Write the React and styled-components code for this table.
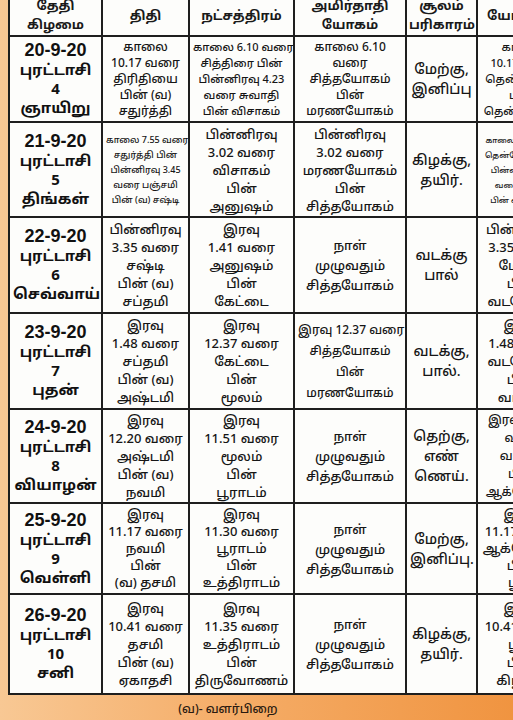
import React from "react";
import styled, { createGlobalStyle } from "styled-components";

const GlobalStyle = createGlobalStyle`
  html, body {
    margin: 0;
    padding: 0;
    overflow: hidden;
    width: 513px;
    height: 720px;
  }
  body {
    background: linear-gradient(90deg, #f8c894 0%, #f5ad68 45%, #f09440 100%);
    font-family: "Noto Sans", "Noto Sans Tamil", "Lohit Tamil", sans-serif;
    color: #1c1c1c;
  }
`;

const heads = [
  { w: 93, lines: ["தேதி", "கிழமை"] },
  { w: 87, lines: ["திதி"] },
  { w: 105, lines: ["நட்சத்திரம்"] },
  { w: 112, lines: ["அமிர்தாதி", "யோகம்"] },
  { w: 71, lines: ["சூலம்", "பரிகாரம்"] },
  { w: 90, lines: ["யோகினி"] }
];

const rows = [
  {
    h: 86,
    date: ["20-9-20", "புரட்டாசி", "4", "ஞாயிறு"],
    thithi: { size: 12, lh: 16, lines: ["காலை", "10.17 வரை", "திரிதியை", "பின் (வ)", "சதுர்த்தி"] },
    star: { size: 11, lh: 16, lines: ["காலை 6.10 வரை", "சித்திரை பின்", "பின்னிரவு 4.23", "வரை சுவாதி", "பின் விசாகம்"] },
    amirtha: { size: 12, lh: 16, lines: ["காலை 6.10", "வரை", "சித்தயோகம்", "பின்", "மரணயோகம்"] },
    soolam: ["மேற்கு,", "இனிப்பு"],
    yogini: { size: 11, lh: 16, lines: ["காலை", "10.17 வரை", "தென்மேற்கு", "பின்", "தென்கிழக்கு"] }
  },
  {
    h: 95,
    date: ["21-9-20", "புரட்டாசி", "5", "திங்கள்"],
    thithi: { size: 9, lh: 15, lines: ["காலை 7.55 வரை", "சதுர்த்தி பின்", "பின்னிரவு 3.45", "வரை பஞ்சமி", "பின் (வ) சஷ்டி"] },
    star: { size: 13, lh: 18, lines: ["பின்னிரவு", "3.02 வரை", "விசாகம்", "பின்", "அனுஷம்"] },
    amirtha: { size: 13, lh: 18, lines: ["பின்னிரவு", "3.02 வரை", "மரணயோகம்", "பின்", "சித்தயோகம்"] },
    soolam: ["கிழக்கு,", "தயிர்."],
    yogini: { size: 8, lh: 15, lines: ["காலை 7.55 வரை", "தென்மேற்கு பின்", "பின்னிரவு 3.45", "வரை மேற்கு", "பின் வடமேற்கு"] }
  },
  {
    h: 96,
    date: ["22-9-20", "புரட்டாசி", "6", "செவ்வாய்"],
    thithi: { size: 13, lh: 18, lines: ["பின்னிரவு", "3.35 வரை", "சஷ்டி", "பின் (வ)", "சப்தமி"] },
    star: { size: 13, lh: 18, lines: ["இரவு", "1.41 வரை", "அனுஷம்", "பின்", "கேட்டை"] },
    amirtha: { size: 13, lh: 20, lines: ["நாள்", "முழுவதும்", "சித்தயோகம்"] },
    soolam: ["வடக்கு", "பால்"],
    yogini: { size: 13, lh: 18, lines: ["பின்னிரவு", "3.35 வரை", "மேற்கு", "பின்", "வடமேற்கு"] }
  },
  {
    h: 96,
    date: ["23-9-20", "புரட்டாசி", "7", "புதன்"],
    thithi: { size: 13, lh: 18, lines: ["இரவு", "1.48 வரை", "சப்தமி", "பின் (வ)", "அஷ்டமி"] },
    star: { size: 13, lh: 18, lines: ["இரவு", "12.37 வரை", "கேட்டை", "பின்", "மூலம்"] },
    amirtha: { size: 12, lh: 21, lines: ["இரவு 12.37 வரை", "சித்தயோகம்", "பின்", "மரணயோகம்"] },
    soolam: ["வடக்கு,", "பால்."],
    yogini: { size: 13, lh: 18, lines: ["இரவு", "1.48 வரை", "வடமேற்கு", "பின்", "வடக்கு"] }
  },
  {
    h: 94,
    date: ["24-9-20", "புரட்டாசி", "8", "வியாழன்"],
    thithi: { size: 13, lh: 18, lines: ["இரவு", "12.20 வரை", "அஷ்டமி", "பின் (வ)", "நவமி"] },
    star: { size: 13, lh: 18, lines: ["இரவு", "11.51 வரை", "மூலம்", "பின்", "பூராடம்"] },
    amirtha: { size: 13, lh: 20, lines: ["நாள்", "முழுவதும்", "சித்தயோகம்"] },
    soolam: ["தெற்கு,", "எண்", "ணெய்."],
    yogini: { size: 12, lh: 18, lines: ["இரவு 12.20", "வரை", "வடக்கு", "பின்", "ஆக்னேயம்"] }
  },
  {
    h: 91,
    date: ["25-9-20", "புரட்டாசி", "9", "வெள்ளி"],
    thithi: { size: 13, lh: 17, lines: ["இரவு", "11.17 வரை", "நவமி", "பின்", "(வ) தசமி"] },
    star: { size: 13, lh: 17, lines: ["இரவு", "11.30 வரை", "பூராடம்", "பின்", "உத்திராடம்"] },
    amirtha: { size: 13, lh: 20, lines: ["நாள்", "முழுவதும்", "சித்தயோகம்"] },
    soolam: ["மேற்கு,", "இனிப்பு."],
    yogini: { size: 13, lh: 17, lines: ["இரவு", "11.17 வரை", "ஆக்னேயம்", "பின்", "பூமி"] }
  },
  {
    h: 100,
    date: ["26-9-20", "புரட்டாசி", "10", "சனி"],
    thithi: { size: 13, lh: 18, lines: ["இரவு", "10.41 வரை", "தசமி", "பின் (வ)", "ஏகாதசி"] },
    star: { size: 13, lh: 18, lines: ["இரவு", "11.35 வரை", "உத்திராடம்", "பின்", "திருவோணம்"] },
    amirtha: { size: 13, lh: 20, lines: ["நாள்", "முழுவதும்", "சித்தயோகம்"] },
    soolam: ["கிழக்கு,", "தயிர்."],
    yogini: { size: 13, lh: 18, lines: ["இரவு", "10.41 வரை", "பூமி", "பின்", "கிழக்கு"] }
  }
];

const App = () => {
  return (
    <Page>
      <GlobalStyle />
      <Sheet>
        <Table>
          <colgroup>
            {heads.map((c, i) => (
              <col key={i} style={{ width: c.w }} />
            ))}
          </colgroup>
          <thead>
            <tr>
              {heads.map((c, i) => (
                <HeadCell key={i}>
                  {c.lines.map((l, j) => (
                    <div key={j}>{l}</div>
                  ))}
                </HeadCell>
              ))}
            </tr>
          </thead>
          <tbody>
            {rows.map((r, i) => (
              <Row key={i} $h={r.h}>
                <DateCell>
                  {r.date.map((l, j) => (
                    <div key={j}>{l}</div>
                  ))}
                </DateCell>
                <Lines cell={r.thithi} />
                <Lines cell={r.star} />
                <Lines cell={r.amirtha} />
                <SoolamCell>
                  {r.soolam.map((l, j) => (
                    <div key={j}>{l}</div>
                  ))}
                </SoolamCell>
                <Lines cell={r.yogini} />
              </Row>
            ))}
          </tbody>
        </Table>
        <Note>(வ)- வளர்பிறை</Note>
      </Sheet>
    </Page>
  );
};

const Lines = ({ cell }) => (
  <Cell $size={cell.size} $lh={cell.lh}>
    {cell.lines.map((l, j) => (
      <div key={j}>{l}</div>
    ))}
  </Cell>
);

export default App;

const Page = styled.div`
  width: 513px;
  height: 720px;
  overflow: hidden;
`;

const Sheet = styled.div`
  padding-left: 8px;
  margin-top: -7px;
`;

const Table = styled.table`
  border-collapse: collapse;
  table-layout: fixed;
  width: 558px;
  background: #fdfdfb;
`;

const HeadCell = styled.th`
  height: 40px;
  border: 2px solid #1e1e1e;
  padding: 0 2px;
  font-size: 13px;
  line-height: 19px;
  font-weight: 700;
  color: #1a1a1a;
  text-align: center;
  vertical-align: middle;
  white-space: nowrap;
`;

const Row = styled.tr`
  height: ${(p) => p.$h}px;
`;

const Cell = styled.td`
  border: 2px solid #1e1e1e;
  padding: 0 3px;
  font-size: ${(p) => p.$size}px;
  line-height: ${(p) => p.$lh}px;
  font-weight: 500;
  color: #161616;
  text-align: center;
  vertical-align: middle;
  white-space: nowrap;
  overflow: hidden;
`;

const DateCell = styled(Cell)`
  font-size: 15px;
  line-height: 19px;
  font-weight: 700;
  color: #111;
  div:first-child {
    font-family: "Liberation Sans", sans-serif;
    font-size: 18px;
  }
`;

const SoolamCell = styled(Cell)`
  font-size: 14px;
  line-height: 20px;
`;

const Note = styled.div`
  width: 440px;
  text-align: center;
  font-size: 12px;
  line-height: 16px;
  padding-top: 6px;
  font-weight: 500;
  color: #2a1a10;
`;
